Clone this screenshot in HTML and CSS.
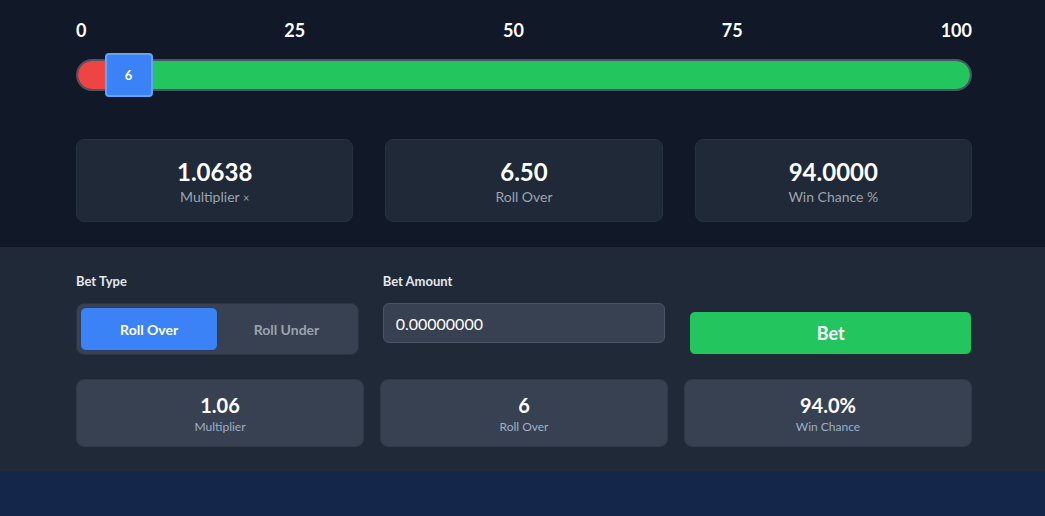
FILE: index.html
```html
<!DOCTYPE html>
<html>
<head>
<meta charset="utf-8">
<link rel="stylesheet" href="styles.css">
</head>
<body>
<section class="top">
  <div class="wrap">
    <div class="scale">
      <span>0</span><span>25</span><span>50</span><span>75</span><span>100</span>
    </div>
    <div class="track">
      <div class="lose" style="width:6%"></div>
      <div class="win"></div>
      <div class="handle" style="left:6%">6</div>
    </div>
    <div class="stats">
      <div class="stat"><div class="val">1.0638</div><div class="lbl">Multiplier <span class="sym">×</span></div></div>
      <div class="stat"><div class="val">6.50</div><div class="lbl">Roll Over</div></div>
      <div class="stat"><div class="val">94.0000</div><div class="lbl">Win Chance %</div></div>
    </div>
  </div>
</section>
<section class="controls">
  <div class="wrap">
    <div class="row">
      <div class="field">
        <label class="flabel">Bet Type</label>
        <div class="toggle">
          <button class="tbtn active">Roll Over</button>
          <button class="tbtn">Roll Under</button>
        </div>
      </div>
      <div class="field">
        <label class="flabel">Bet Amount</label>
        <input class="amount" type="text" value="0.00000000">
      </div>
      <div class="field end">
        <button class="bet">Bet</button>
      </div>
    </div>
    <div class="mini">
      <div class="mcard"><div class="mval">1.06</div><div class="mlbl">Multiplier</div></div>
      <div class="mcard"><div class="mval">6</div><div class="mlbl">Roll Over</div></div>
      <div class="mcard"><div class="mval">94.0%</div><div class="mlbl">Win Chance</div></div>
    </div>
  </div>
</section>
<section class="rest"></section>
</body>
</html>
```
FILE: styles.css
```css
* { box-sizing: border-box; }
html, body { margin: 0; padding: 0; }
body {
  font-family: Lato, "Noto Sans", sans-serif;
  background: #14264a;
  color: #fff;
  height: 516px;
  overflow: hidden;
}
.wrap { width: 896px; margin-left: 76px; }
.top { background: #111827; padding: 19px 0 25px; }
.scale {
  display: flex;
  justify-content: space-between;
  font-weight: 700;
  font-size: 18px;
  line-height: 22px;
}
.track {
  position: relative;
  margin-top: 18px;
  height: 32px;
  border-radius: 16px;
  border: 2px solid #4b5563;
  display: flex;
}
.lose { background: #ef4444; border-radius: 14px 0 0 14px; }
.win { flex: 1; background: #22c55e; border-radius: 0 14px 14px 0; }
.handle {
  position: absolute;
  top: -8px;
  width: 48px;
  height: 44px;
  margin-left: -27px;
  background: #3b82f6;
  border: 2px solid #60a5fa;
  border-radius: 4px;
  display: flex;
  align-items: center;
  justify-content: center;
  font-size: 13px;
  font-weight: 700;
}
.stats {
  margin-top: 48px;
  display: grid;
  grid-template-columns: repeat(3, 1fr);
  gap: 32px;
}
.stat {
  height: 83px;
  background: #1f2937;
  border: 1px solid #263142;
  border-radius: 8px;
  display: flex;
  flex-direction: column;
  align-items: center;
  justify-content: center;
  padding-top: 4px;
}
.val { font-size: 24px; font-weight: 700; line-height: 28px; }
.lbl { font-size: 14px; color: #9ca3af; line-height: 20px; margin-top: 1px; }
.sym { font-size: 11px; }
.controls { background: #1f2937; padding: 26px 0 24px; }
.row {
  display: grid;
  grid-template-columns: repeat(3, 1fr);
  gap: 24px;
}
.field { display: flex; flex-direction: column; }
.field.end { justify-content: flex-end; }
.flabel {
  font-size: 13px;
  font-weight: 700;
  color: #e5e7eb;
  line-height: 16px;
  margin-bottom: 14px;
}
.toggle {
  background: #374151;
  border: 1px solid #2b3441;
  border-radius: 8px;
  padding: 3px;
  display: flex;
  height: 52px;
}
.tbtn {
  flex: 1;
  border: none;
  background: transparent;
  font-family: inherit;
  font-weight: 700;
  font-size: 14px;
  color: #9ca3af;
  border-radius: 6px;
}
.tbtn.active { background: #3b82f6; color: #fff; border: 1px solid #2c3e5c; }
.amount {
  height: 40px;
  background: #374151;
  border: 1px solid #4b5563;
  border-radius: 6px;
  color: #fff;
  font-family: inherit;
  font-size: 16px;
  padding: 0 12px;
  outline: none;
}
.bet {
  height: 44px;
  background: #22c55e;
  border: 1px solid #1a2e2e;
  border-radius: 6px;
  color: #fff;
  font-family: inherit;
  font-size: 18px;
  font-weight: 700;
}
.mini {
  margin-top: 24px;
  display: grid;
  grid-template-columns: repeat(3, 1fr);
  gap: 16px;
}
.mcard {
  height: 68px;
  background: #374151;
  border: 1px solid #2f3846;
  border-radius: 8px;
  display: flex;
  flex-direction: column;
  align-items: center;
  justify-content: center;
  padding-top: 2px;
}
.mval { font-size: 20px; font-weight: 700; line-height: 24px; }
.mlbl { font-size: 12px; color: #9cb0c8; line-height: 16px; margin-top: 2px; }
.rest { height: 60px; }
```
